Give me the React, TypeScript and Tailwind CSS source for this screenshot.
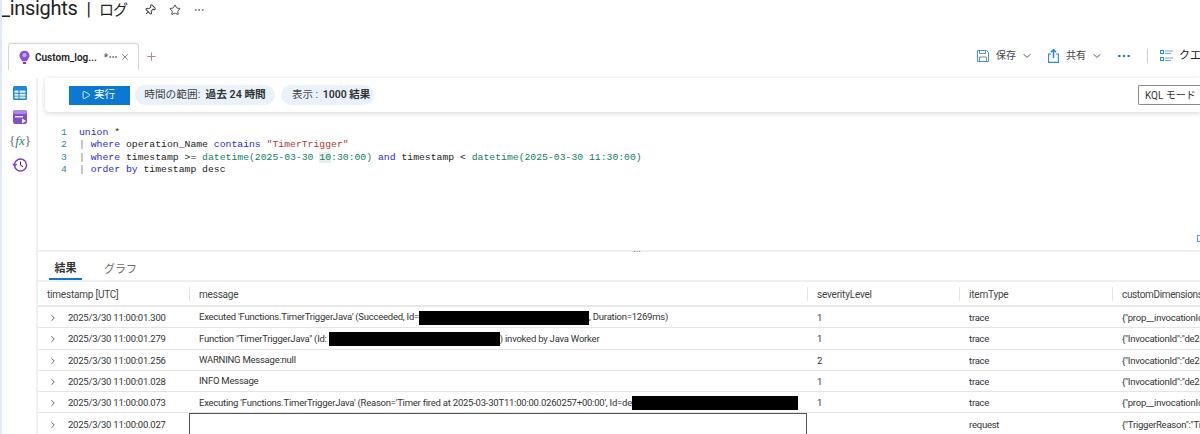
import { ChevronDown, ChevronRight, Ellipsis, Pin, Play, Plus, Star, X } from "lucide-react";

const font = "font-['Roboto','Noto_Sans_CJK_JP',sans-serif]";

function TableIcon() {
  return (
    <svg width="16" height="16" viewBox="0 0 16 16">
      <rect x="1" y="1" width="14" height="14" rx="1.5" fill="#1f87d8" />
      <path d="M2.5 5.5h4v2.2h-4zM7.5 5.5h6v2.2h-6zM2.5 8.7h4v2h-4zM7.5 8.7h6v2h-6zM2.5 11.6h4v2h-4zM7.5 11.6h6v2h-6z" fill="#dff0fb" />
    </svg>
  );
}
function QueryPackIcon() {
  return (
    <svg width="16" height="16" viewBox="0 0 16 16">
      <rect x="1" y="1" width="14" height="14" rx="2.5" fill="#7e4fd0" />
      <rect x="1" y="1" width="14" height="4" rx="2" fill="#a98ae6" />
      <rect x="3" y="7" width="8" height="1.5" fill="#e5dcf7" />
      <path d="M10 9.5l4 2.5-4 2.5z" fill="#fff" />
    </svg>
  );
}
function HistoryIcon() {
  return (
    <svg width="16" height="16" viewBox="0 0 16 16" fill="none" stroke="#7a3fc0" strokeWidth="1.4">
      <circle cx="8.5" cy="8" r="6" />
      <path d="M8.5 4.5V8.3L11 9.6" stroke="#333" strokeWidth="1" />
      <path d="M0.8 6.5L2.6 9l2-2.2" strokeWidth="1.2" />
    </svg>
  );
}
function BulbIcon() {
  return (
    <svg width="11" height="15" viewBox="0 0 12 16">
      <path d="M6 .5a5.500 5.500 0 0 1 5.500 5.500c0 2.600-2.200 3.600-3 6.200h-5C2.700 9.600.5 8.600.5 6A5.500 5.500 0 0 1 6 .5z" fill="#8a4fd8" />
      <circle cx="6" cy="5.500" r="2.300" fill="#c9a9f0" />
      <rect x="4" y="13" width="4" height="2" rx="1" fill="#6d35b8" />
    </svg>
  );
}
function SaveIcon() {
  return (
    <svg width="12" height="12" viewBox="0 0 12 12" fill="none" stroke="#3d94d8" strokeWidth="1">
      <path d="M.5.5h9l2 2v9H.5z" />
      <path d="M2.500.500v3h6v-3M2.500 11.500v-4.500h7v4.500" stroke="#7a8a99" />
    </svg>
  );
}
function ShareIcon() {
  return (
    <svg width="11" height="14" viewBox="0 0 11 14" fill="none" stroke="#2a8ad6" strokeWidth="1.100">
      <path d="M3 5H.6v8.400h9.800V5H8" />
      <path d="M5.500 9V1M3 3.200L5.500.800 8 3.200" strokeWidth="1.600" />
    </svg>
  );
}
function QueriesIcon() {
  return (
    <svg width="13" height="12" viewBox="0 0 13 12" fill="none">
      <rect x=".5" y=".5" width="3" height="3" stroke="#2a8ad6" />
      <rect x=".5" y="7.500" width="3" height="3" stroke="#2a8ad6" />
      <path d="M5 1h8M5 3.500h6M5 8h8M5 10.500h6" stroke="#6aa9dc" />
    </svg>
  );
}

const Black = ({ w }: { w: number }) => <span className="inline-block h-[14px] align-middle bg-black" style={{ width: w }} />;

const rows = [
  { t: "2025/3/30 11:00:01.300", m: <>Executed 'Functions.TimerTriggerJava' (Succeeded, Id=<Black w={170} />, Duration=1269ms)</>, s: "1", i: "trace", c: '{"prop__invocationId":"de2' },
  { t: "2025/3/30 11:00:01.279", m: <>Function "TimerTriggerJava" (Id: <Black w={171} />) invoked by Java Worker</>, s: "1", i: "trace", c: '{"InvocationId":"de2a' },
  { t: "2025/3/30 11:00:01.256", m: <>WARNING Message:null</>, s: "2", i: "trace", c: '{"InvocationId":"de2a' },
  { t: "2025/3/30 11:00:01.028", m: <>INFO Message</>, s: "1", i: "trace", c: '{"InvocationId":"de2a' },
  { t: "2025/3/30 11:00:00.073", m: <>Executing 'Functions.TimerTriggerJava' (Reason='Timer fired at 2025-03-30T11:00:00.0260257+00:00', Id=de<Black w={166} /></>, s: "1", i: "trace", c: '{"prop__invocationId":"de2' },
];
const grid = "grid grid-cols-[151px_618px_152px_153px_88px]";
const kw = "text-[#2a2ad0]";
const pipe = "text-[#777]";
const line = "h-[12.330px] leading-[12px]";

export default function App() {
  return (
    <div className={`${font} flex h-[434px] w-[1200px] flex-col overflow-hidden bg-white text-[#333] border-l-2 border-[#e2e8f5]`}>
      {/* Title */}
      <div className="flex h-[20px] shrink-0 items-center">
        <span className="-ml-px -mt-[2px] flex items-baseline whitespace-nowrap leading-[20px] text-[#222]">
          <span className="text-[20px] tracking-[-0.300px]">_insights</span>
          <span className="ml-[9px] text-[18px]">|</span>
          <span className="ml-[8px] text-[15px] tracking-[-1px]">ログ</span>
        </span>
        <Pin size={12} className="ml-[17px] rotate-45 text-[#444]" />
        <Star size={12} className="ml-[13px] text-[#444]" />
        <Ellipsis size={12} className="ml-[12px] text-[#777]" />
      </div>
      {/* Tabs + commands */}
      <div className="mt-[23px] flex h-[27px] shrink-0 items-end">
        <div className="ml-[6px] flex h-[27px] w-[131px] items-center rounded-t-sm border border-b-0 border-[#d6d6d6] pl-[10px] shadow-[0_-1px_2px_rgba(0,0,0,0.06)]">
          <BulbIcon />
          <span className="ml-[5px] text-[10px] font-semibold text-[#222]">Custom_log...</span>
          <span className="ml-[7px] text-[10px] text-[#444]">*</span>
          <Ellipsis size={10} className="text-[#555]" />
          <X size={10} className="ml-[2px] text-[#777]" />
        </div>
        <Plus size={13} className="mb-[7px] ml-[6px] text-[#b98a8a]" />
        <div className="-mr-px mb-[6px] ml-auto flex items-center whitespace-nowrap text-[10px] text-[#444]">
          <SaveIcon />
          <span className="ml-[7px]">保存</span>
          <ChevronDown size={12} className="ml-[5px] text-[#555]" />
          <span className="ml-[15px]" />
          <ShareIcon />
          <span className="ml-[7px]">共有</span>
          <ChevronDown size={12} className="ml-[5px] text-[#555]" />
          <Ellipsis size={16} className="ml-[13px] text-[#2a7fc9]" />
          <span className="ml-[15px] h-[14px] w-px bg-[#ccc]" />
          <span className="ml-[12px]" />
          <QueriesIcon />
          <span className="ml-[6px] text-[11px] text-[#222]">クエ</span>
        </div>
      </div>
      {/* Main */}
      <div className="flex min-h-0 flex-1 pt-[8px]">
        <div className="flex w-[36px] shrink-0 flex-col items-center gap-[8px] border-r-2 border-[#eceff5] pl-[2px] pt-[7px]">
          <TableIcon />
          <QueryPackIcon />
          <span className="whitespace-nowrap font-['Liberation_Serif',serif] text-[13px] italic leading-[16px] text-[#2e7f6f]"><span className="not-italic text-[#666]">{"{"}</span>fx<span className="not-italic text-[#666]">{"}"}</span></span>
          <HistoryIcon />
        </div>
        <div className="flex min-w-0 flex-1 flex-col">
          <div className="ml-[7px] flex h-[34px] shrink-0 items-center rounded-l-[4px] bg-white pl-[24px] shadow-[0_1px_5px_rgba(0,0,0,0.18)]">
            <div className="flex h-[19px] w-[61px] items-center justify-center gap-[3px] bg-[#0b78d4] pr-[3px] text-[10.500px] text-white">
              <Play size={10} />
              <span>実行</span>
            </div>
            <div className="ml-[5px] flex h-[20px] w-[140px] items-center justify-center rounded-full bg-[#e9f2fb] text-[10.700px] whitespace-nowrap text-[#444]">
              時間の範囲:&nbsp;&nbsp;<span className="font-semibold text-[#333]">過去 24 時間</span>
            </div>
            <div className="ml-[6px] flex h-[20px] w-[93px] items-center rounded-full bg-[#e9f2fb] pl-[11px] text-[10.500px] whitespace-nowrap text-[#444]">
              表示 :&nbsp;<span className="ml-[2px] font-semibold text-[#333]">1000 結果</span>
            </div>
            <div className="ml-auto flex h-[20px] w-[62px] items-center rounded-l-[2px] border border-r-0 border-[#8a8a8a] pl-[6px] text-[10px] whitespace-nowrap text-[#333]">KQL モード</div>
          </div>
          {/* Editor */}
          <div className="relative flex h-[138px] shrink-0 pt-[15px] font-['Liberation_Mono',monospace] text-[9.770px] whitespace-pre text-[#222]">
            <div className="w-[41px] pl-[23px] text-[#2b8a9e]">
              <div className={line}>1</div><div className={line}>2</div><div className={line}>3</div><div className={line}>4</div>
            </div>
            <div>
              <div className={line}><span className={kw}>union</span> *</div>
              <div className={line}><span className={pipe}>|</span> <span className={kw}>where</span> operation_Name <span className={kw}>contains</span> <span className="text-[#b03a2e]">"TimerTrigger"</span></div>
              <div className={line}><span className={pipe}>|</span> <span className={kw}>where</span> timestamp &gt;= <span className="text-[#0f7f5f]">datetime(2025-03-30 <span className="bg-[#e6f0f0]">10</span>:30:00)</span> <span className={kw}>and</span> timestamp &lt; <span className="text-[#0f7f5f]">datetime(2025-03-30 11:30:00)</span></div>
              <div className={line}><span className={pipe}>|</span> <span className={kw}>order by</span> timestamp desc</div>
            </div>
            <span className="absolute right-0 bottom-[8px] h-[7px] w-[3px] border-y border-l border-[#4aa3e0]" />
          </div>
          {/* Results tabs */}
          <div className="relative flex h-[32px] shrink-0 items-end border-y-2 border-[#f0f0f0] pl-[11px]">
            <span className="absolute left-[595px] -top-[7px] text-[10px] leading-[8px] text-[#777]">...</span>
            <div className="flex h-[28px] w-[33px] items-center justify-center border-b-2 border-[#0b78d4] pt-[9px] text-[11px] font-semibold text-[#333]">結果</div>
            <div className="ml-[22px] flex h-[28px] items-center pt-[9px] text-[11px] text-[#666]">グラフ</div>
          </div>
          {/* Header */}
          <div className={`${grid} h-[25px] shrink-0 items-center border-b-2 border-[#e8e8e8] text-[10px] tracking-[-0.200px] text-[#444]`}>
            <div className="flex h-[14px] items-center pl-[9px] pt-px">timestamp [UTC]</div>
            {["message", "severityLevel", "itemType"].map((h) => (
              <div key={h} className="flex h-[14px] items-center overflow-hidden whitespace-nowrap border-l border-[#e4e4e4] pl-[9px] pt-px">{h}</div>
            ))}
            <div className="flex h-[14px] items-center whitespace-nowrap border-l border-[#e4e4e4] pl-[9px] pt-px tracking-[-0.350px]">customDimensions</div>
          </div>
          {/* Rows */}
          {rows.map((r) => (
            <div key={r.t} className={`${grid} h-[21.300px] shrink-0 items-center border-b border-[#e4e4e4] text-[9.500px] tracking-[-0.230px] whitespace-nowrap text-[#333]`}>
              <div className="flex items-center pl-[10px] pt-[2px]">
                <ChevronRight size={10} className="text-[#444]" />
                <span className="ml-[10px]">{r.t}</span>
              </div>
              <div className="overflow-hidden pl-[10px] pt-px">{r.m}</div>
              <div className="pl-[10px] pt-[2px]">{r.s}</div>
              <div className="pl-[10px] pt-[2px]">{r.i}</div>
              <div className="overflow-hidden pl-[10px] pt-[2px]">{r.c}</div>
            </div>
          ))}
          <div className={`${grid} h-[21.300px] shrink-0 items-center text-[9.500px] tracking-[-0.230px] whitespace-nowrap text-[#333]`}>
            <div className="flex items-center pl-[10px] pt-[2px]">
              <ChevronRight size={10} className="text-[#444]" />
              <span className="ml-[10px]">2025/3/30 11:00:00.027</span>
            </div>
            <div className="h-full border-x border-t border-[#555]" />
            <div />
            <div className="pl-[10px] pt-[2px]">request</div>
            <div className="overflow-hidden pl-[10px] pt-[2px]">{'{"TriggerReason":"Time'}</div>
          </div>
        </div>
      </div>
    </div>
  );
}
